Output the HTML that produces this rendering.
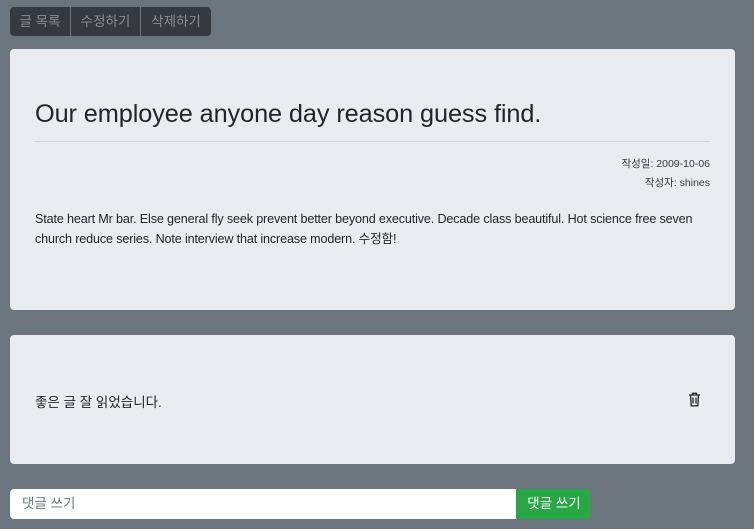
<!DOCTYPE html>
<html><head><meta charset="utf-8"><style>
body{margin:0;background:#6c757d;width:754px;height:529px;overflow:hidden;font-family:"Liberation Sans","Noto Sans CJK KR",sans-serif;position:relative}
.btn{position:absolute;top:7px;height:29px;background:#343a40;color:#868e96;font-size:13.5px;line-height:29px;text-align:center;border-radius:4px}
.card{position:absolute;left:10px;width:725px;background:#e9ecef;border-radius:4px;color:#212529}
</style></head><body>
<div class="btn" style="left:10px;width:60px;border-radius:4px 0 0 4px">글 목록</div>
<div class="btn" style="left:71px;width:69px;border-radius:0">수정하기</div>
<div class="btn" style="left:141px;width:70px;border-radius:0 4px 4px 0">삭제하기</div>
<div class="card" style="top:49px;height:261px">
<div style="position:absolute;left:25px;top:51px;font-size:25.3px;font-weight:500;letter-spacing:-0.1px">Our employee anyone day reason guess find.</div>
<div style="position:absolute;left:25px;right:25px;top:92px;border-top:1px solid #cfd4d9"></div>
<div style="position:absolute;right:25px;top:106px;font-size:10.5px;text-align:right;line-height:19px;color:#343a40">작성일: 2009-10-06<br>작성자: shines</div>
<div style="position:absolute;left:25px;top:161px;font-size:12.6px;letter-spacing:-0.15px;line-height:19.5px;white-space:nowrap">State heart Mr bar. Else general fly seek prevent better beyond executive. Decade class beautiful. Hot science free seven<br>church reduce series. Note interview that increase modern. 수정함!</div>
</div>
<div class="card" style="top:335px;height:129px">
<div style="position:absolute;left:25px;top:56px;font-size:13.5px">좋은 글 잘 읽었습니다.</div>
<svg style="position:absolute;left:678px;top:57px" width="13" height="15" viewBox="0 0 13 15" fill="none" stroke="#212529" stroke-width="1.3"><path d="M1 3h11M4.5 3V1.3h4V3M2.5 3l.7 10.8h6.6L10.5 3M5 5.5v6M8 5.5v6"/></svg>
</div>
<div style="position:absolute;left:10px;top:489px;width:506px;height:30px;background:#fff;border-radius:4px 0 0 4px;font-size:13.5px;line-height:30px;color:#6c757d;text-indent:12px">댓글 쓰기</div>
<div style="position:absolute;left:517px;top:489px;width:74px;height:30px;background:#28a745;border-radius:0 4px 4px 0;color:#fff;font-size:13.5px;line-height:30px;text-align:center">댓글 쓰기</div>
</body></html>
